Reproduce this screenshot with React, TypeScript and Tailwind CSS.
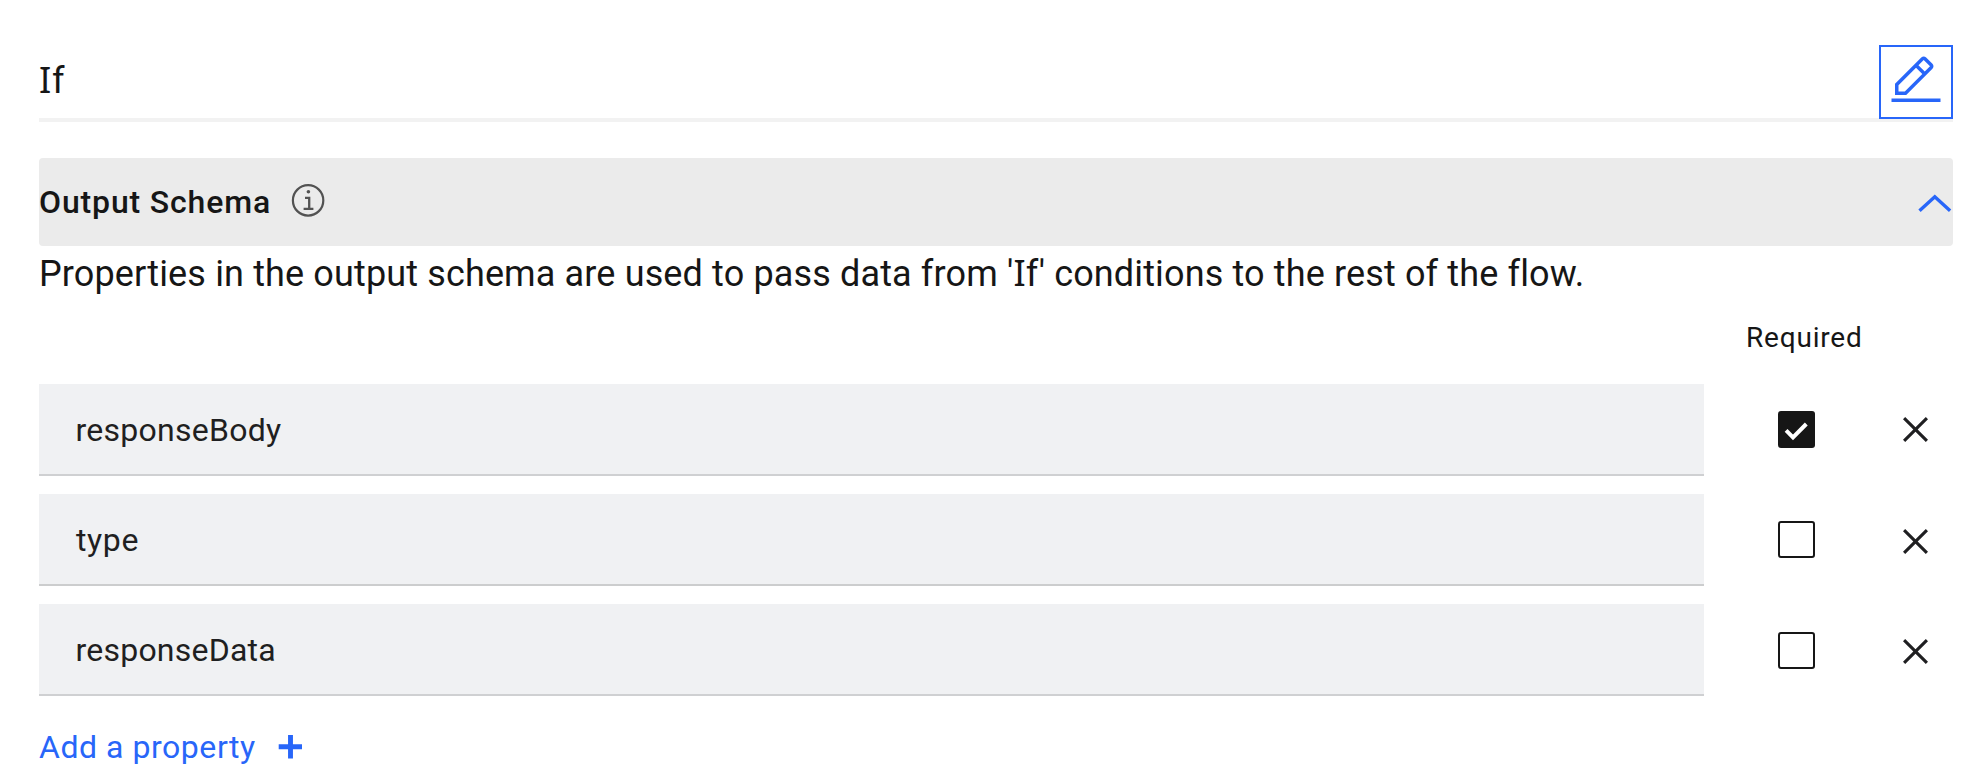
type Property = {
  name: string;
  required: boolean;
  tracking: string;
  inset: string;
  border: string;
  boxOffset: string;
  closeOffset: string;
};

const properties: Property[] = [
  { name: 'responseBody', required: true, tracking: 'tracking-[0.26px]', inset: 'pl-[36.5px]', border: 'border-[#cfd0d2]', boxOffset: 'mt-[27px]', closeOffset: 'mt-[33px]' },
  { name: 'type', required: false, tracking: 'tracking-[0.6px]', inset: 'pl-[37px]', border: 'border-[#cccdce]', boxOffset: 'mt-[27px]', closeOffset: 'mt-[35px]' },
  { name: 'responseData', required: false, tracking: 'tracking-[0.22px]', inset: 'pl-[36.5px]', border: 'border-[#cfd0d2]', boxOffset: 'mt-[28px]', closeOffset: 'mt-[35px]' },
];

function SerifI() {
  return <span className="font-['Noto_Sans',sans-serif] leading-none">I</span>;
}

function EditIcon() {
  return (
    <svg className="size-14" viewBox="0 0 32 32" fill="currentColor">
      <rect x="2" y="26" width="28" height="2" />
      <path d="M25.4 9c.8-.8.8-2 0-2.8l-3.6-3.6c-.8-.8-2-.8-2.8 0l-15 15V24h6.4L25.4 9zM20.4 4L24 7.6l-3 3L17.4 7l3-3zM6 22v-3.6l10-10 3.6 3.6-10 10H6z" />
    </svg>
  );
}

function InfoIcon() {
  return (
    <svg className="h-[34px] w-[34px] text-[#525252]" viewBox="0 0 34 34" fill="none" stroke="currentColor">
      <circle cx="17.1" cy="17.4" r="15.2" strokeWidth="2.2" />
      <circle cx="17.4" cy="8.7" r="1.8" fill="currentColor" stroke="none" />
      <path d="M14 14.8h4.2v10.9M12.6 25.9h9.8" strokeWidth="2.3" />
    </svg>
  );
}

function ChevronUp() {
  return (
    <svg className="h-5 w-[37px]" viewBox="0 0 37 20" fill="none" stroke="currentColor">
      <path d="M3.5 17.8L18.8 3.7l15.3 14.1" strokeWidth="3.4" />
    </svg>
  );
}

function CloseIcon() {
  return (
    <svg className="size-[25px]" viewBox="8 8 16 16" fill="currentColor">
      <path d="M24 9.4L22.6 8 16 14.6 9.4 8 8 9.4l6.6 6.6L8 22.6 9.4 24l6.6-6.6 6.6 6.6 1.4-1.4-6.6-6.6L24 9.4z" />
    </svg>
  );
}

function Checkbox({ checked }: { checked: boolean }) {
  if (!checked) return <div className="size-[37px] rounded-[3px] border-2 border-[#161616]" />;
  return (
    <div className="size-[37px] rounded-[3px] bg-[#161616]">
      <svg className="size-[37px]" viewBox="0 0 37 37" fill="none" stroke="#fff">
        <path d="M8.1 19.4l6.9 6.9 13.3-13.3" strokeWidth="4" />
      </svg>
    </div>
  );
}

function PropertyRow({ item }: { item: Property }) {
  return (
    <div className="flex h-[92px] items-start">
      <div className={`flex h-full w-[1665px] items-center border-b-2 bg-[#f0f1f3] pt-0.5 text-[32px] text-[#1f1f21] ${item.border} ${item.tracking} ${item.inset}`}>
        {item.name}
      </div>
      <div className={`ml-[74px] ${item.boxOffset}`}>
        <Checkbox checked={item.required} />
      </div>
      <button className={`ml-[88px] text-[#1f1f21] ${item.closeOffset}`} aria-label="Remove">
        <CloseIcon />
      </button>
    </div>
  );
}

export default function App() {
  return (
    <div className="h-[780px] w-[1978px] overflow-hidden bg-white pt-[45px] pr-[25px] pl-[39px] font-['Roboto','Liberation_Sans',sans-serif] text-[#161616]">
      <header className="flex h-[77px] items-start justify-between border-b-4 border-[#f2f2f2]">
        <h1 className="pt-[11px] text-[36px] leading-[50px] tracking-[0.8px]">
          <SerifI />f
        </h1>
        <button className="relative flex size-[74px] items-center justify-center border-2 border-[#2866f9] pb-0.5 text-[#2866f9]" aria-label="Edit">
          <EditIcon />
        </button>
      </header>

      <section className="mt-9 flex h-[88px] items-center rounded bg-[#ebebeb]">
        <h2 className="w-[252px] text-[32px] font-medium tracking-[0.85px] whitespace-nowrap">Output Schema</h2>
        <div className="pb-[5px]">
          <InfoIcon />
        </div>
        <div className="ml-auto pt-0.5 text-[#2866f9]">
          <ChevronUp />
        </div>
      </section>

      <p className="h-14 text-[36px] leading-[57px] tracking-[0.14px] whitespace-nowrap">
        Properties in the output schema are used to pass data from '<SerifI />f' conditions to the rest of the flow.
      </p>

      <div className="h-[82px] pt-4 pl-[1707px] text-[28px] leading-10 tracking-[0.8px]">Required</div>

      <div className="flex flex-col gap-[18px]">
        {properties.map((item) => (
          <PropertyRow key={item.name} item={item} />
        ))}
      </div>

      <button className="mt-[31px] flex h-10 items-center text-[#2866f9]">
        <span className="w-[239px] text-left text-[32px] leading-10 tracking-[0.54px] whitespace-nowrap">Add a property</span>
        <svg className="size-6" viewBox="0 0 24 24" fill="none" stroke="currentColor">
          <path d="M12.5 0v23.5M.7 11.7h23.3" strokeWidth="4.9" />
        </svg>
      </button>
    </div>
  );
}
